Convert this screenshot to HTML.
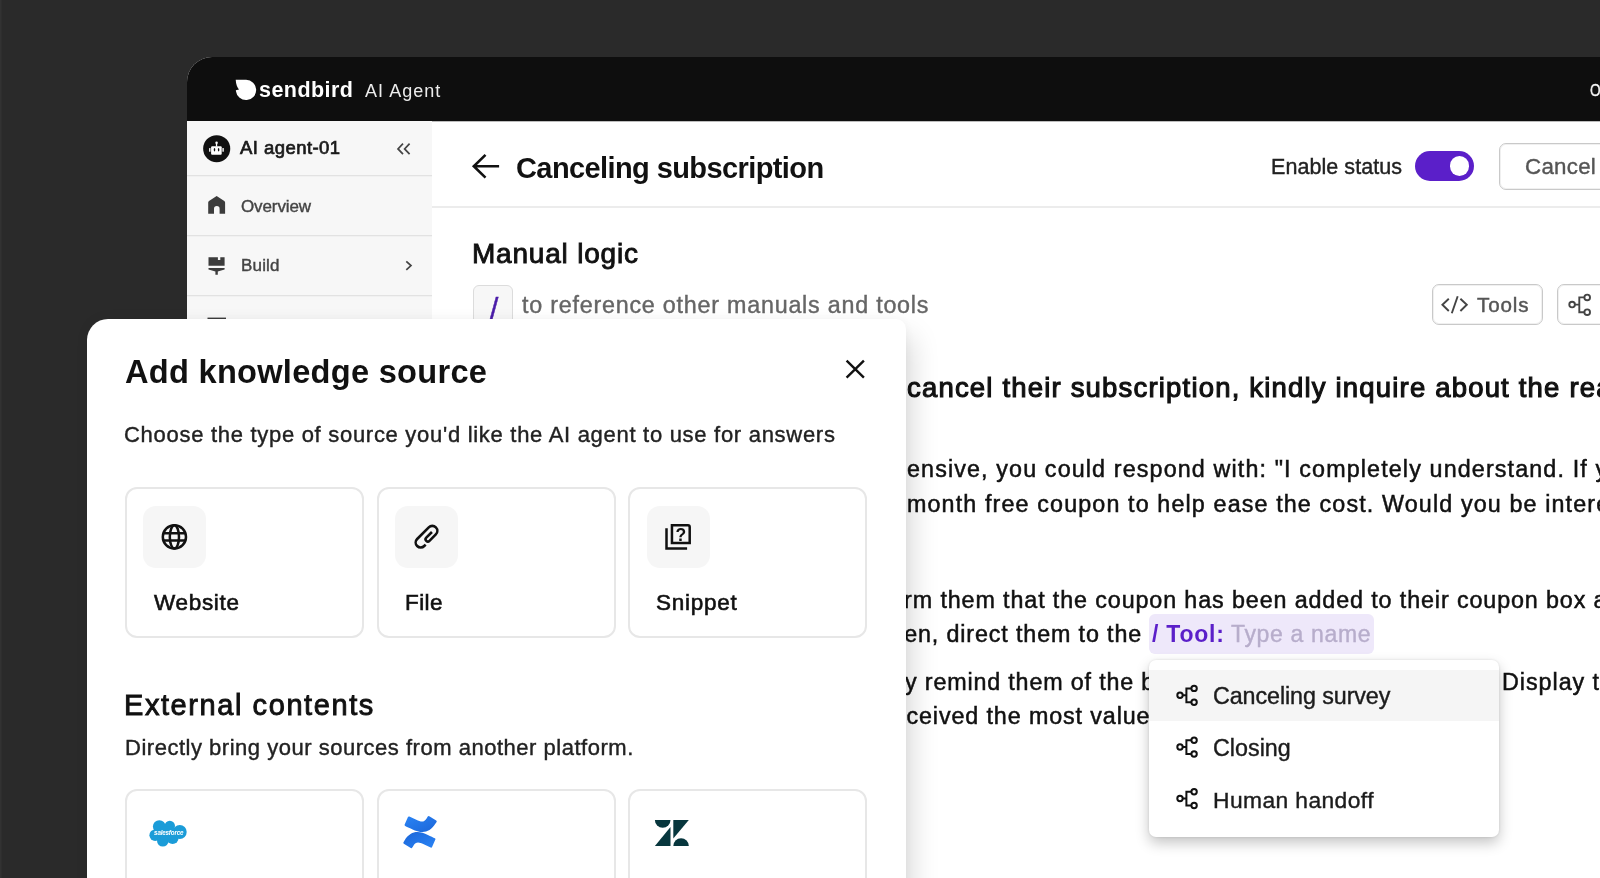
<!DOCTYPE html>
<html lang="en">
<head>
<meta charset="utf-8">
<title>Sendbird AI Agent</title>
<style>
*{box-sizing:border-box;margin:0;padding:0}
html,body{width:1600px;height:878px;overflow:hidden;background:#2a2a2a}
body{position:relative;font-family:"Liberation Sans",sans-serif;color:#111}
.abs{position:absolute}
.t{position:absolute;white-space:pre;line-height:1;display:block;will-change:transform}
svg{position:absolute;left:0;top:0;overflow:visible;pointer-events:none}
#win{position:absolute;left:187px;top:57px;width:1500px;height:900px;border-top-left-radius:25px;background:#fff;overflow:hidden}
#topbar{position:absolute;left:0;top:0;width:100%;height:64px;background:#0e0e0e;box-shadow:0 1px 0 rgba(14,14,14,.28)}
#side{position:absolute;left:0;top:64px;width:245px;height:900px;background:#f7f7f7}
.sdiv{position:absolute;left:0;width:245px;height:1px;background:#e2e2e2;box-shadow:0 1px 0 #f1f1f1}
#hdrline{position:absolute;left:245px;top:149px;width:1300px;height:2px;background:#ececec}
#modal{position:absolute;left:87px;top:319.3px;width:818.5px;height:700px;background:#fff;border-radius:21px 10px 0 0;box-shadow:16px 8px 28px -10px rgba(0,0,0,.15),0 0 14px rgba(0,0,0,.05)}
.card{position:absolute;width:239px;height:151px;border:2px solid #e7e7e7;border-radius:12px;background:#fff}
.ibg{position:absolute;width:63px;height:62px;border-radius:13px;background:#f6f6f6}
.btn{position:absolute;border:1px solid #c9c9c9;border-radius:7px;background:#fff;box-shadow:inset 0 0 0 1px rgba(0,0,0,.06)}
#dd{position:absolute;left:1148.5px;top:659.5px;width:350.2px;height:177.4px;background:#fff;border-radius:7px;box-shadow:0 6px 14px rgba(0,0,0,.23),0 0 3px rgba(0,0,0,.12)}
#ddhl{position:absolute;left:0;top:10.5px;width:100%;height:50.8px;background:#f5f5f5}
#chip{position:absolute;left:1149px;top:613.5px;width:225px;height:40.4px;border-radius:6px;background:#eee8fa}
</style>
</head>
<body>
<div class="abs" style="left:0;top:0;width:2px;height:878px;background:linear-gradient(90deg,#343434,#2c2c2c)"></div>
<div id="win">
  <div id="topbar"></div>
  <div id="side"></div>
  <div class="sdiv" style="top:118px"></div>
  <div class="sdiv" style="top:178px"></div>
  <div class="sdiv" style="top:238px"></div>
  <div id="hdrline"></div>
</div>

<!-- header controls -->
<div class="abs" style="left:1415.1px;top:151.2px;width:59.1px;height:29.8px;border-radius:15px;background:#5b1fc9"></div>
<div class="abs" style="left:1449.7px;top:156.2px;width:19.6px;height:19.6px;border-radius:10px;background:#fff"></div>
<div class="btn" style="left:1499.3px;top:143px;width:140px;height:46.7px"></div>
<div class="abs" style="left:473.3px;top:285px;width:40.2px;height:40px;border:1px solid #dcdcdc;border-radius:6px;background:#f7f7f7"></div>
<div class="btn" style="left:1432px;top:284px;width:111px;height:41px"></div>
<div class="btn" style="left:1557px;top:284px;width:80px;height:41px"></div>
<div id="chip"></div>

<svg width="1600" height="878" viewBox="0 0 1600 878">
  <!-- sendbird logo -->
  <path d="M235.7 79.8 L246.1 79.8 A10.15 10.15 0 1 1 235.95 91.2 L235.85 90.2 L239 89.5 C237.3 87.6 236 84.6 235.7 79.8 Z" fill="#fff"/>
  <!-- avatar -->
  <circle cx="216.7" cy="148.7" r="13.55" fill="#111"/>
  <g fill="#fff">
    <rect x="211.1" y="146.2" width="10.6" height="8.6" rx="1"/>
    <rect x="215.9" y="142.6" width="1.3" height="4"/>
    <circle cx="216.55" cy="142.7" r="1.25"/>
    <rect x="209.1" y="148.1" width="1.4" height="3.7" rx=".5"/>
    <rect x="222.4" y="148.1" width="1.4" height="3.7" rx=".5"/>
  </g>
  <ellipse cx="214.5" cy="149.8" rx=".75" ry="1.7" fill="#111"/>
  <ellipse cx="218.6" cy="149.8" rx=".75" ry="1.7" fill="#111"/>
  <!-- collapse chevrons -->
  <path d="M403 143.6 L398 148.9 L403 154.2 M409.6 143.6 L404.6 148.9 L409.6 154.2" fill="none" stroke="#444" stroke-width="1.7"/>
  <!-- home -->
  <path d="M208.2 213.7 V202.6 Q208.2 201.6 209 201 L216.65 196 L224.3 201 Q225.1 201.6 225.1 202.6 V213.7 H219.6 V208.9 A2.8 2.8 0 0 0 214 208.9 V213.7 Z" fill="#3c3c3c"/>
  <!-- build (brush) -->
  <path d="M208.5 257.2 H217.9 V260 H220.3 V257.2 H224.6 V265.7 H208.5 Z M208.5 267.9 H224.6 V269.4 L217.8 271.4 V274.8 H215.4 V271.4 L208.5 269.4 Z" fill="#3c3c3c"/>
  <path d="M406.3 261.3 L411 265.6 L406.3 269.9" fill="none" stroke="#444" stroke-width="1.7"/>
  <!-- third sidebar icon sliver -->
  <rect x="207.5" y="317.6" width="18.5" height="4" fill="#3c3c3c"/>
  <!-- back arrow -->
  <path d="M485.5 154.9 L473.8 166.2 L485.5 177.6 M474 166.2 H499.1" fill="none" stroke="#111" stroke-width="2.6"/>
  <!-- tools icon -->
  <path d="M1448.8 298.7 L1442.4 304.8 L1448.8 311 M1457.7 296.3 L1451.8 313.2 M1460.4 298.7 L1466.8 304.8 L1460.4 311" fill="none" stroke="#444" stroke-width="1.9"/>
  <!-- workflow icon (toolbar) -->
  <g fill="none" stroke="#444" stroke-width="1.9">
    <circle cx="1572.1" cy="304.6" r="2.8"/><circle cx="1587.2" cy="297.4" r="2.8"/><circle cx="1587.2" cy="312.2" r="2.8"/>
    <path d="M1574.9 304.6 H1579.3 M1584.4 297.4 H1579.3 V312.2 H1584.4"/>
  </g>
</svg>
<span class="t" id="sb" style="left:259.20px;top:80px;font-size:21.5px;color:#fff;font-weight:700;letter-spacing:0.443px;">sendbird</span>
<span class="t" id="aia" style="left:365.20px;top:82px;font-size:18px;color:#ececec;letter-spacing:1.043px;">AI Agent</span>
<span class="t" id="org" style="left:1589.90px;top:82px;font-size:17.2px;color:#fff;-webkit-text-stroke:0.4px #fff;transform:scaleX(.8);transform-origin:0 0;">Organization</span>
<span class="t" id="ag" style="left:240.20px;top:139px;font-size:18.5px;color:#1a1a1a;letter-spacing:0.450px;-webkit-text-stroke:0.7px #1a1a1a;">AI agent-01</span>
<span class="t" id="ov" style="left:241.10px;top:198px;font-size:17px;color:#444;letter-spacing:-0.114px;-webkit-text-stroke:0.4px #444;">Overview</span>
<span class="t" id="bd" style="left:241.10px;top:257px;font-size:17px;color:#444;letter-spacing:0.175px;-webkit-text-stroke:0.4px #444;">Build</span>
<span class="t" id="ttl" style="left:516.00px;top:154px;font-size:29px;color:#111;font-weight:700;letter-spacing:-0.595px;">Canceling subscription</span>
<span class="t" id="en" style="left:1271.30px;top:157px;font-size:21.5px;color:#222;letter-spacing:0.058px;-webkit-text-stroke:0.4px #222;">Enable status</span>
<span class="t" id="cc" style="left:1524.60px;top:156px;font-size:22.3px;color:#555;letter-spacing:0.280px;-webkit-text-stroke:0.4px #555;">Cancel</span>
<span class="t" id="ml" style="left:472.10px;top:240px;font-size:28px;color:#111;letter-spacing:0.800px;-webkit-text-stroke:0.9px #111;">Manual logic</span>
<span class="t" id="sl" style="left:489.60px;top:294px;font-size:30px;color:#4a1ca8;-webkit-text-stroke:0.5px #4a1ca8;">/</span>
<span class="t" id="ref" style="left:521.50px;top:294px;font-size:23.3px;color:#666;letter-spacing:0.771px;-webkit-text-stroke:0.4px #666;">to reference other manuals and tools</span>
<span class="t" id="tl" style="left:1476.50px;top:295px;font-size:20.6px;color:#555;letter-spacing:0.875px;-webkit-text-stroke:0.45px #555;">Tools</span>
<span class="t" id="h1" style="left:907.00px;top:374px;font-size:27.5px;color:#111;letter-spacing:1.185px;-webkit-text-stroke:1.1px #111;">cancel their subscription, kindly inquire about the reason</span>
<span class="t" id="l2" style="left:865.61px;top:458px;font-size:23.3px;color:#111;letter-spacing:1.131px;-webkit-text-stroke:0.5px #111;">expensive, you could respond with: &quot;I completely understand. If you</span>
<span class="t" id="l3" style="left:907.00px;top:493px;font-size:23.3px;color:#111;letter-spacing:1.130px;-webkit-text-stroke:0.5px #111;">month free coupon to help ease the cost. Would you be interested</span>
<span class="t" id="l4" style="left:862.96px;top:589px;font-size:23.3px;color:#111;letter-spacing:0.886px;-webkit-text-stroke:0.5px #111;">inform them that the coupon has been added to their coupon box and</span>
<span class="t" id="l5" style="left:883.26px;top:623px;font-size:23.3px;color:#111;letter-spacing:0.868px;-webkit-text-stroke:0.5px #111;">then, direct them to the</span>
<span class="t" id="l6" style="left:899.17px;top:671px;font-size:23.3px;color:#111;letter-spacing:0.833px;-webkit-text-stroke:0.5px #111;">ly remind them of the benefits</span>
<span class="t" id="l6b" style="left:1501.75px;top:671px;font-size:23.3px;color:#111;letter-spacing:0.969px;-webkit-text-stroke:0.5px #111;">Display the</span>
<span class="t" id="l7" style="left:884.23px;top:705px;font-size:23.3px;color:#111;letter-spacing:0.887px;-webkit-text-stroke:0.5px #111;">received the most value</span>
<span class="t" id="ct" style="left:1152.20px;top:623px;font-size:23px;color:#5b1fc9;font-weight:700;letter-spacing:0.767px;">/ Tool:</span>
<span class="t" id="cp" style="left:1230.70px;top:623px;font-size:23px;color:#b7adcb;letter-spacing:0.660px;-webkit-text-stroke:0.4px #b7adcb;">Type a name</span>

<!-- dropdown -->
<div id="dd"><div id="ddhl"></div></div>
<svg width="1600" height="878" viewBox="0 0 1600 878">
  <g transform="translate(1187.1 695.2)" fill="none" stroke="#111" stroke-width="2">
    <circle cx="-7.1" cy="0" r="2.7"/><circle cx="7" cy="-6.8" r="2.7"/><circle cx="7" cy="7" r="2.7"/>
    <path d="M-4.4 0 H-.7 M4.3 -6.8 H-.7 V7 H4.3"/>
  </g>
  <g transform="translate(1187.1 747)" fill="none" stroke="#111" stroke-width="2">
    <circle cx="-7.1" cy="0" r="2.7"/><circle cx="7" cy="-6.8" r="2.7"/><circle cx="7" cy="7" r="2.7"/>
    <path d="M-4.4 0 H-.7 M4.3 -6.8 H-.7 V7 H4.3"/>
  </g>
  <g transform="translate(1187.1 798.5)" fill="none" stroke="#111" stroke-width="2">
    <circle cx="-7.1" cy="0" r="2.7"/><circle cx="7" cy="-6.8" r="2.7"/><circle cx="7" cy="7" r="2.7"/>
    <path d="M-4.4 0 H-.7 M4.3 -6.8 H-.7 V7 H4.3"/>
  </g>
</svg>
<span class="t" id="d1" style="left:1212.80px;top:685px;font-size:23.3px;color:#1c1c1c;letter-spacing:-0.087px;-webkit-text-stroke:0.4px #1c1c1c;">Canceling survey</span>
<span class="t" id="d2" style="left:1212.80px;top:737px;font-size:23.3px;color:#1c1c1c;letter-spacing:0.017px;-webkit-text-stroke:0.4px #1c1c1c;">Closing</span>
<span class="t" id="d3" style="left:1212.60px;top:789px;font-size:22.8px;color:#1c1c1c;letter-spacing:0.417px;-webkit-text-stroke:0.4px #1c1c1c;">Human handoff</span>

<!-- modal -->
<div id="modal"></div>
<div class="card" style="left:124.6px;top:487.2px"><div class="ibg" style="left:16.5px;top:16.8px"></div></div>
<div class="card" style="left:376.6px;top:487.2px"><div class="ibg" style="left:16.5px;top:16.8px"></div></div>
<div class="card" style="left:628.2px;top:487.2px"><div class="ibg" style="left:16.5px;top:16.8px"></div></div>
<div class="card" style="left:124.6px;top:789.4px"></div>
<div class="card" style="left:376.6px;top:789.4px"></div>
<div class="card" style="left:628.2px;top:789.4px"></div>
<svg width="1600" height="878" viewBox="0 0 1600 878">
  <defs>
    <linearGradient id="cg1" x1="0" y1="0" x2="1" y2="1"><stop offset="0" stop-color="#2a84f5"/><stop offset="1" stop-color="#1b65d8"/></linearGradient>
    <linearGradient id="cg2" x1="1" y1="1" x2="0" y2="0"><stop offset="0" stop-color="#2a84f5"/><stop offset="1" stop-color="#1b65d8"/></linearGradient>
  </defs>
  <!-- close -->
  <path d="M846.6 360.7 L863.9 377.7 M863.9 360.7 L846.6 377.7" fill="none" stroke="#111" stroke-width="2.4"/>
  <!-- globe -->
  <g fill="none" stroke="#111" stroke-width="2.5">
    <circle cx="174.4" cy="536.9" r="11.6"/>
    <ellipse cx="174.4" cy="536.9" rx="4.6" ry="11.6"/>
    <path d="M163.4 533.2 H185.4 M163.4 540.6 H185.4"/>
  </g>
  <!-- paperclip -->
  <g transform="translate(426.5 536.7) rotate(-45)" fill="none" stroke="#111" stroke-width="2.6">
    <path d="M7.2 .5 L-.8 .5 A2.25 2.25 0 0 0 -.8 5 L8.2 5 A5 5 0 0 0 8.2 -5 L-8.2 -5 A5 5 0 0 0 -8.2 5 L-6.2 5"/>
  </g>
  <!-- snippet -->
  <g fill="none" stroke="#111" stroke-width="2.5">
    <path d="M671.95 525.25 H688 Q689.7 525.25 689.7 527 V543.1 H671.95 Z"/>
    <path d="M666.5 528.2 V548.5 H687.1"/>
  </g>
  <text x="680.9" y="540.7" font-family="Liberation Sans, sans-serif" font-size="17.5" font-weight="700" text-anchor="middle" fill="#111">?</text>
  <!-- salesforce -->
  <g fill="#1b9cd8">
    <circle cx="159.3" cy="826.6" r="6.4"/><circle cx="169.8" cy="826" r="5.2"/><circle cx="179.8" cy="832" r="6.9"/>
    <circle cx="155.2" cy="835.2" r="5.8"/><circle cx="162.8" cy="840.8" r="5.8"/><circle cx="172.6" cy="838" r="6"/>
    <ellipse cx="167.5" cy="833" rx="10" ry="7"/>
  </g>
  <text x="168.7" y="834.6" font-family="Liberation Sans, sans-serif" font-size="6.3" font-style="italic" font-weight="700" text-anchor="middle" fill="#fff" letter-spacing="-.2">salesforce</text>
  <!-- confluence -->
  <g transform="translate(403.3 816) scale(.1309)">
    <path fill="url(#cg2)" d="M9.26 187.33c-2.64 4.31-5.61 9.31-7.93 13.29a8.13 8.13 0 0 0 2.73 11.06l53.04 32.64a8.13 8.13 0 0 0 11.24-2.78c2.08-3.49 4.78-8.06 7.72-12.93 20.97-34.6 42.1-30.37 80.14-12.2l52.6 25.01a8.13 8.13 0 0 0 10.93-4.03l25.26-57.12a8.13 8.13 0 0 0-4.06-10.64c-11.1-5.22-33.18-15.63-53.04-25.22-71.5-34.73-132.27-32.49-178.63 42.92z"/>
    <path fill="url(#cg1)" d="M246.11 58.23c2.64-4.31 5.61-9.31 8.13-13.29a8.13 8.13 0 0 0-2.73-11.06L198.47 1.24a8.13 8.13 0 0 0-11.58 2.69c-2.11 3.55-4.81 8.12-7.75 13-20.97 34.6-42.1 30.37-80.14 12.2L46.56 4.2a8.13 8.13 0 0 0-10.93 4.03L10.37 65.35a8.13 8.13 0 0 0 4.06 10.64c11.1 5.22 33.18 15.63 53.04 25.22 71.5 34.7 132.27 32.4 178.63-42.98z"/>
  </g>
  <!-- zendesk -->
  <g fill="#07363d">
    <path d="M654.9 819.9 H670.5 A7.8 7.8 0 0 1 654.9 819.9 Z"/>
    <path d="M670.5 827.1 V845.9 H654.9 Z"/>
    <path d="M673.3 819.9 H688.8 L673.3 838.4 Z"/>
    <path d="M673.3 845.9 A7.75 7.75 0 0 1 688.8 845.9 Z"/>
  </g>
</svg>
<span class="t" id="mh" style="left:124.50px;top:356px;font-size:32.6px;color:#111;font-weight:700;letter-spacing:0.279px;">Add knowledge source</span>
<span class="t" id="ms" style="left:124.00px;top:424px;font-size:22px;color:#222;letter-spacing:0.709px;-webkit-text-stroke:0.4px #222;">Choose the type of source you&#x27;d like the AI agent to use for answers</span>
<span class="t" id="c1" style="left:153.90px;top:592px;font-size:22.5px;color:#111;letter-spacing:0.683px;-webkit-text-stroke:0.6px #111;">Website</span>
<span class="t" id="c2" style="left:405.00px;top:592px;font-size:22.5px;color:#111;letter-spacing:0.433px;-webkit-text-stroke:0.6px #111;">File</span>
<span class="t" id="c3" style="left:656.20px;top:592px;font-size:22.5px;color:#111;letter-spacing:0.750px;-webkit-text-stroke:0.6px #111;">Snippet</span>
<span class="t" id="eh" style="left:123.80px;top:691px;font-size:29px;color:#111;letter-spacing:1.575px;-webkit-text-stroke:0.9px #111;">External contents</span>
<span class="t" id="es" style="left:124.50px;top:737px;font-size:22px;color:#222;letter-spacing:0.516px;-webkit-text-stroke:0.4px #222;">Directly bring your sources from another platform.</span>
</body>
</html>
